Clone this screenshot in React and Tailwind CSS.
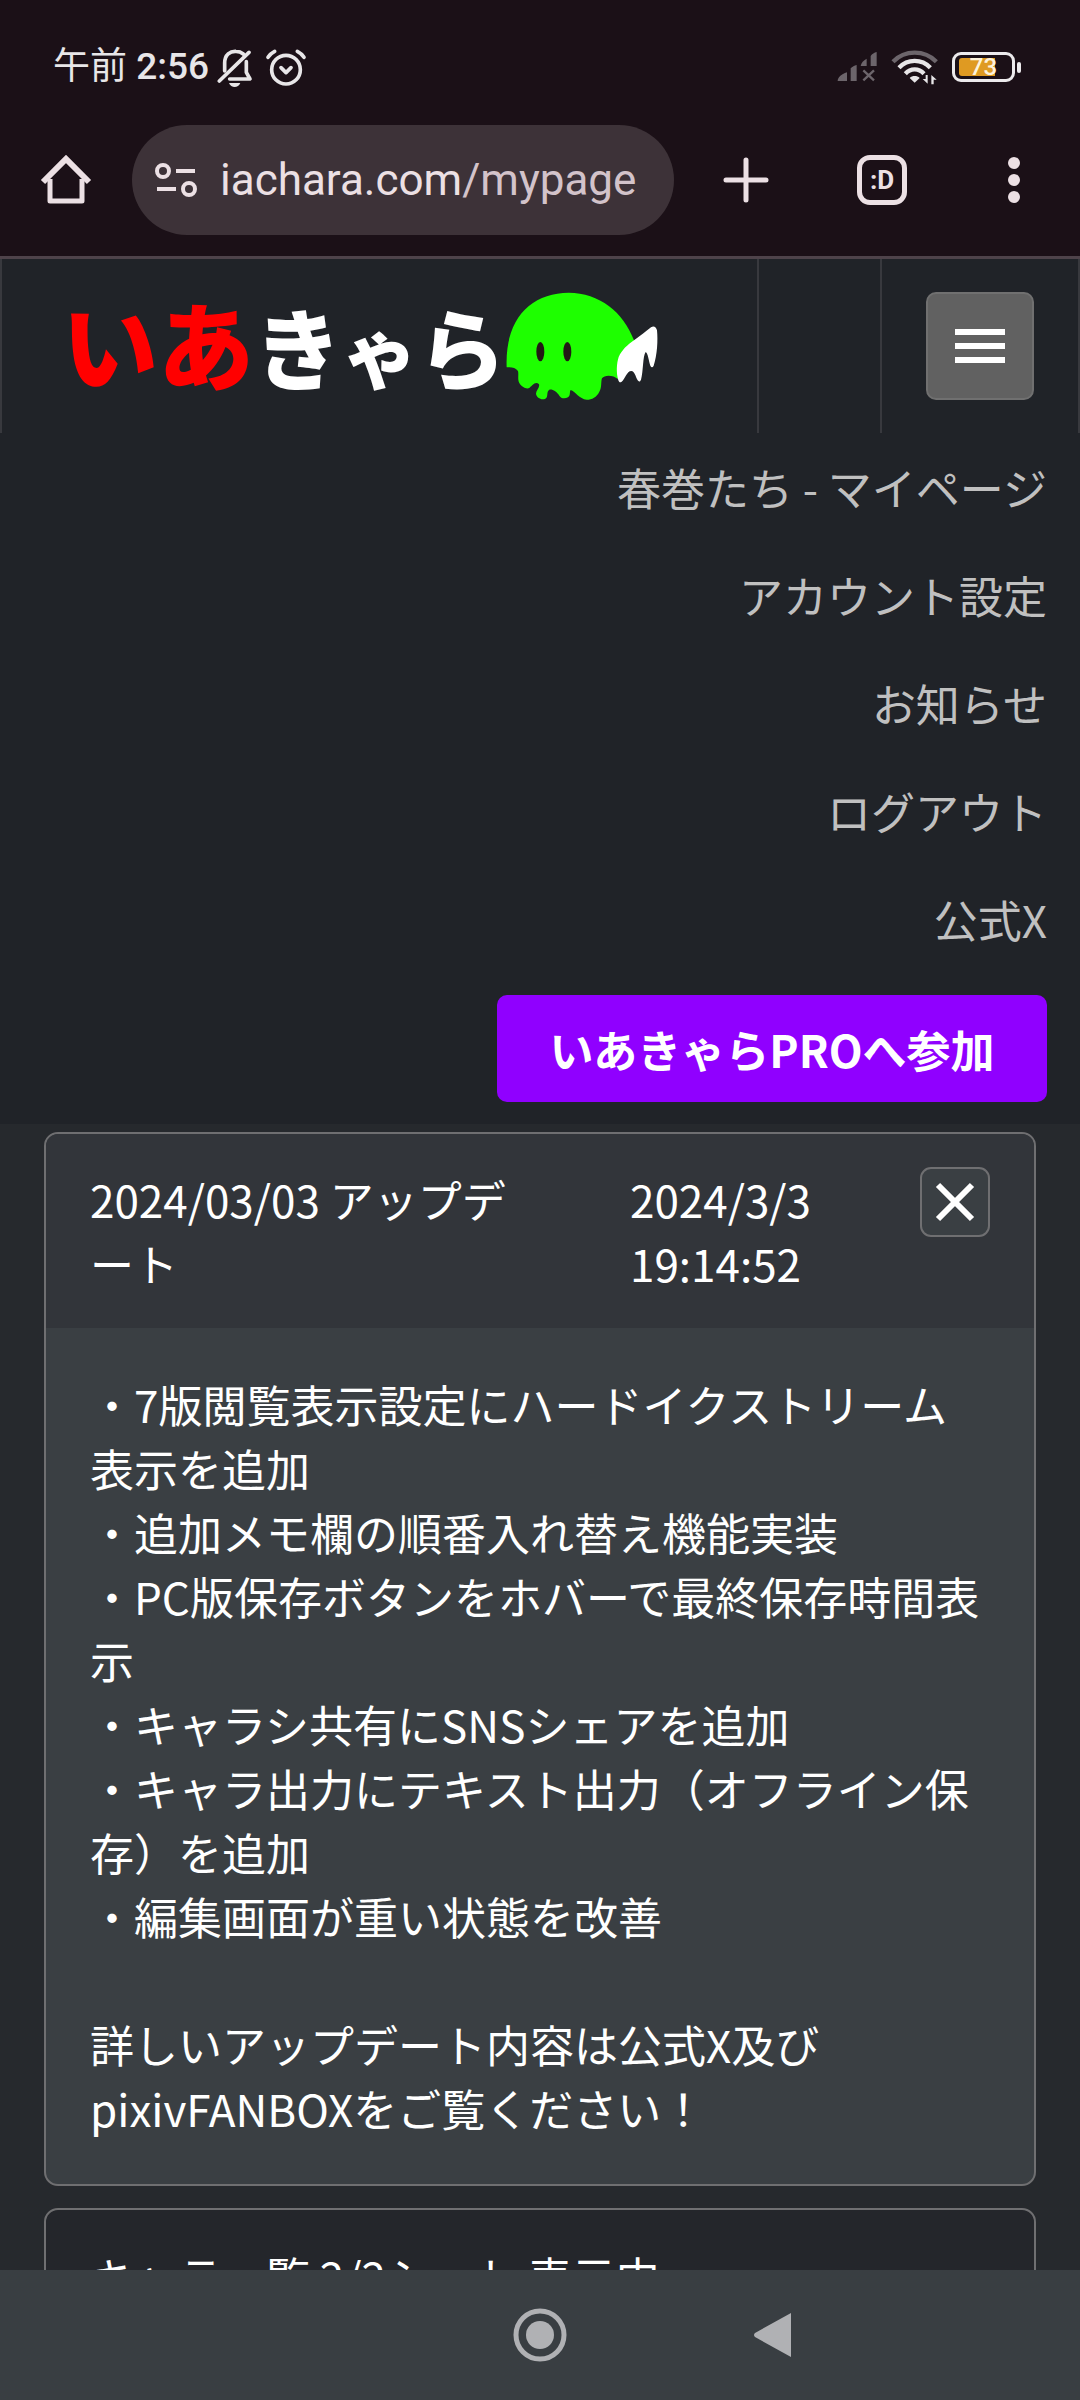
import React from "react";

const menuItems = ["春巻たち - マイページ", "アカウント設定", "お知らせ", "ログアウト", "公式X"];

const newsText = `・7版閲覧表示設定にハードイクストリーム表示を追加
・追加メモ欄の順番入れ替え機能実装
・PC版保存ボタンをホバーで最終保存時間表示
・キャラシ共有にSNSシェアを追加
・キャラ出力にテキスト出力（オフライン保存）を追加
・編集画面が重い状態を改善

詳しいアップデート内容は公式X及びpixivFANBOXをご覧ください！`;

function StatusBar() {
  return (
    <div className="flex h-[104px] items-center justify-between pl-[53px] pr-[59px] pt-[30px] text-[#e8e6e8]">
      <div className="flex items-center">
        <span className="font-[Roboto,'Noto_Sans_CJK_JP',sans-serif] text-[37px] leading-[40px] font-medium">
          <span className="font-normal">午前</span> 2:56
        </span>
        <svg className="ml-2 h-[40px] w-[36px]" viewBox="0 0 108 120" fill="none" stroke="currentColor" strokeWidth="11">
          <path d="M23 72V48C23 22 40 12 57 13c9 0 16 3 22 8M88 44v32l11 20H38" strokeLinejoin="round" strokeLinecap="round" />
          <path d="M7 102 96 16" strokeLinecap="round" />
          <path d="M36 108h34c-3 8-10 12-17 12s-14-4-17-12z" fill="currentColor" stroke="none" />
        </svg>
        <svg className="ml-3 h-[40px] w-[42px]" viewBox="0 0 126 120" fill="none" stroke="currentColor" strokeWidth="11" strokeLinecap="round">
          <circle cx="63" cy="68" r="43" />
          <path d="M9 31c5-8 12-14 20-18M117 31c-5-8-12-14-20-18" />
          <path d="m48 62 15 15 15-15" strokeLinejoin="round" />
        </svg>
      </div>
      <div className="flex items-center gap-[14px]">
        <svg className="h-[32px] w-[40px]" viewBox="46 42 120 96" fill="#6c656b">
          <path d="M48 132c0-10 10-20 28-26v26zM87 132V94c5-5 11-9 18-10v48zM117 87c2-10 8-17 18-22v22zM147 87V57c4-6 11-10 18-12v42z" />
          <path d="m125 100 32 30m0-30-32 30" stroke="#6c656b" strokeWidth="7" />
        </svg>
        <svg className="h-[36px] w-[47px]" viewBox="208 39 141 108" fill="none" strokeWidth="13">
          <path d="M214 77c36-36 94-36 130 0" stroke="#6c656b" />
          <path d="M232 95c26-27 68-27 94 0M251 113c16-17 40-17 56 0" stroke="currentColor" />
          <path d="m279 140-15-14c8-8 22-8 30 0z" fill="currentColor" />
          <path d="M318 117v26l-15-14h9v-12zM329 145v-28l16 14h-9v14z" fill="currentColor" />
        </svg>
        <div className="flex items-center gap-[2px]">
          <div className="relative flex h-[30px] w-[63px] items-center rounded-[9px] border-[3px] border-[#eceaec] px-1">
            <div className="h-[18px] w-[36px] rounded-l-[3px] bg-[#df9a22]" />
            <span className="absolute inset-0 text-center font-[Roboto,sans-serif] text-[24px] leading-[25px] font-medium text-[#fdf3dc]">
              73
            </span>
          </div>
          <div className="h-[11px] w-1 rounded-full bg-[#eceaec]" />
        </div>
      </div>
    </div>
  );
}

function BrowserBar() {
  return (
    <div className="flex h-[152px] items-center pr-[60px] pl-[40px] text-[#ece0e4]">
      <button type="button" aria-label="ホーム" className="shrink-0">
        <svg className="h-[52px] w-[52px]" viewBox="0 0 52 52" fill="none" stroke="currentColor" strokeWidth="5" strokeLinejoin="round">
          <path d="M10 25v22h32V25" />
          <path d="M3 28 26 5l23 23" strokeWidth="6" strokeLinejoin="miter" />
        </svg>
      </button>
      <div className="ml-[40px] flex h-[110px] min-w-0 flex-1 items-center rounded-full bg-[#3d3238] pl-[22px]">
        <svg className="h-[36px] w-[44px] shrink-0" viewBox="0 0 44 36" fill="none" stroke="currentColor" strokeWidth="4">
          <circle cx="9" cy="9" r="6" />
          <path d="M22 9h19M3 27h19" />
          <circle cx="35" cy="27" r="6" />
        </svg>
        <span className="ml-[22px] font-[Roboto,sans-serif] text-[44px] whitespace-nowrap">
          iachara.com<span className="text-[#d3c3ca]">/mypage</span>
        </span>
      </div>
      <div className="ml-[49px] flex items-center">
        <button type="button" aria-label="新しいタブ">
          <svg className="h-[46px] w-[46px]" viewBox="0 0 46 46" stroke="currentColor" strokeWidth="5" strokeLinecap="round">
            <path d="M23 3v40M3 23h40" />
          </svg>
        </button>
        <button
          type="button"
          className="ml-[88px] h-[50px] w-[50px] rounded-[13px] border-[5px] border-current font-[Roboto,sans-serif] text-[26px] leading-[36px] font-bold"
        >
          :D
        </button>
        <button type="button" aria-label="メニュー" className="ml-[101px]">
          <svg className="h-[46px] w-[12px]" viewBox="0 0 12 46" fill="currentColor">
            <circle cx="6" cy="6" r="6" />
            <circle cx="6" cy="23" r="6" />
            <circle cx="6" cy="40" r="6" />
          </svg>
        </button>
      </div>
    </div>
  );
}

function Mascot() {
  return (
    <svg className="h-[108px] w-[152px] shrink-0" viewBox="20 31 456 324">
      <path
        d="M22 257C16 110 96 34 208 33C300 34 372 90 404 176L356 292C342 280 316 278 308 290C304 300 308 318 300 330C292 346 278 354 262 354C240 352 228 330 214 325C210 330 214 342 206 347C196 352 184 350 180 342C172 330 160 322 150 324C140 330 148 346 138 351C126 356 112 348 110 336C110 326 122 318 119 308C108 296 98 314 88 320C74 322 58 308 57 294C56 284 58 276 56 268C48 256 34 256 22 257Z"
        fill="#1eff00"
      />
      <ellipse cx="123" cy="210" rx="12" ry="29" fill="#231815" />
      <ellipse cx="204" cy="210" rx="12" ry="29" fill="#231815" />
      <path
        d="M404 176C424 162 440 148 455 137C464 132 470 136 473 146C476 176 474 220 463 252C460 258 456 258 453 252C448 238 446 214 439 211C430 222 432 270 425 294C422 301 418 301 415 296C408 284 406 268 396 268C382 268 378 292 367 300C363 304 359 302 357 296C350 272 352 244 358 226C368 204 384 190 404 176Z"
        fill="#fff"
      />
    </svg>
  );
}

function SiteHeader() {
  return (
    <header className="bg-[#202328] pb-[22px]">
      <div className="flex h-[174px] border-x-2 border-[#38393e]">
        <a href="#top" className="flex min-w-0 flex-1 items-center pl-[60px]">
          <span className="text-[88px] leading-[100px] font-black whitespace-nowrap text-white">
            <span className="text-[96px] text-[#ff0000]">いあ</span>
            き<span className="text-[76px]">ゃ</span>ら
          </span>
          <Mascot />
        </a>
        <div className="w-[125px] border-x-2 border-[#38393e]" />
        <div className="flex w-[196px] items-center justify-end pr-[44px]">
          <button
            type="button"
            aria-label="メニューを開く"
            className="flex h-[108px] w-[108px] flex-col items-center justify-center gap-2 rounded-[10px] border-2 border-[#707070] bg-[#616161]"
          >
            <span className="h-[6px] w-[50px] bg-white" />
            <span className="h-[6px] w-[50px] bg-white" />
            <span className="h-[6px] w-[50px] bg-white" />
          </button>
        </div>
      </div>
      <nav className="flex flex-col items-end pr-[33px]">
        {menuItems.map((item) => (
          <a key={item} href="#menu" className="h-[108px] text-[44px] leading-[108px] text-[#c0c0c0]">
            {item}
          </a>
        ))}
        <button type="button" className="mt-[22px] h-[107px] w-[550px] rounded-[10px] bg-[#9000ff] text-[44px] font-bold text-white">
          いあきゃらPROへ参加
        </button>
      </nav>
    </header>
  );
}

function NewsCard() {
  return (
    <section className="overflow-hidden rounded-[14px] border-2 border-[#6f6f71] bg-[#3a3f43]">
      <div className="flex items-start bg-[#32353a] px-[44px] py-[33px]">
        <h2 className="mr-[10%] w-1/2 break-all">2024/03/03 アップデート</h2>
        <time className="w-[25%]">2024/3/3 19:14:52</time>
        <button
          type="button"
          aria-label="閉じる"
          className="ml-auto flex h-[70px] w-[70px] items-center justify-center rounded-[11px] border-2 border-[#6f6f71] bg-[#3a3f43]"
        >
          <svg className="h-[40px] w-[40px]" viewBox="0 0 40 40" stroke="currentColor" strokeWidth="6">
            <path d="m3 3 34 34M37 3 3 37" />
          </svg>
        </button>
      </div>
      <p className="p-[44px] whitespace-pre-wrap">{newsText}</p>
    </section>
  );
}

export default function App() {
  return (
    <div lang="ja" className="flex h-screen flex-col overflow-hidden bg-[#26292d] font-['Noto_Sans_CJK_JP',sans-serif]">
      <div className="shrink-0 border-b-[3px] border-[#4e434a] bg-[#1b1017]">
        <StatusBar />
        <BrowserBar />
      </div>
      <div className="min-h-0 flex-1 overflow-hidden">
        <SiteHeader />
        <main className="flex flex-col gap-[22px] px-[44px] pt-2 text-[44px] leading-[64px] text-white">
          <NewsCard />
          <section className="rounded-[14px] border-2 border-[#6f6f71] bg-[#24262b] px-[44px] py-[34px]">
            <h2>キャラ一覧 2/2シート 表示中</h2>
          </section>
        </main>
      </div>
      <nav className="grid h-[130px] shrink-0 grid-cols-[1fr_auto_1fr] items-center bg-[#393e42] text-[#b0b1b4]">
        <button type="button" aria-label="ホームへ" className="col-start-2">
          <svg className="h-[56px] w-[56px]" viewBox="0 0 56 56" fill="none" stroke="currentColor" strokeWidth="5">
            <circle cx="28" cy="28" r="24" />
            <circle cx="28" cy="28" r="14" fill="currentColor" stroke="none" />
          </svg>
        </button>
        <button type="button" aria-label="戻る" className="ml-[186px] justify-self-start">
          <svg className="h-[46px] w-[38px]" viewBox="0 0 38 46" fill="currentColor">
            <path d="M37 1v44L1 25q-2-2 0-4z" />
          </svg>
        </button>
      </nav>
    </div>
  );
}
